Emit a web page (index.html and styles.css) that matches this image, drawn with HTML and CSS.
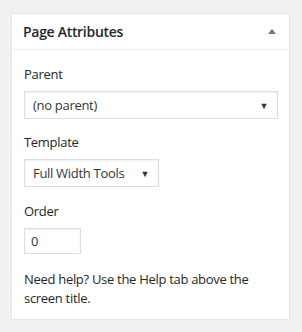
FILE: index.html
```html
<!DOCTYPE html>
<html lang="en">
<head>
  <meta charset="UTF-8">
  <title>Page Attributes</title>
  <link rel="stylesheet" href="styles.css">
</head>
<body>

  <!-- Page Attributes box -->
  <div class="postbox">
    <div class="postbox-header">
      <h2 class="hndle">Page Attributes</h2>
      <span class="toggle-indicator"></span>
    </div>

    <div class="inside">
      <p class="label">Parent</p>
      <div class="select wide">
        <span>(no parent)</span>
        <span class="caret">&#9660;</span>
      </div>

      <p class="label">Template</p>
      <div class="select">
        <span>Full Width Tools</span>
        <span class="caret">&#9660;</span>
      </div>

      <p class="label">Order</p>
      <div class="order-input">0</div>

      <p class="help">Need help? Use the Help tab above the screen title.</p>
    </div>
  </div>

</body>
</html>
```

FILE: styles.css
```css
body {
  background-color: #f1f1f1;
  font-family: 'Open Sans', sans-serif;
  font-size: 13px;
  letter-spacing: -0.3px;
  color: #23282d;
  margin: 0;
  padding: 13px 12px 0 11px;
}

.postbox {
  background: #fff;
  border: 1px solid #e5e5e5;
  box-shadow: 0 1px 1px rgba(0, 0, 0, 0.04);
}

.postbox-header {
  display: flex;
  align-items: center;
  justify-content: space-between;
  height: 35px;
  padding: 0 13px 0 11px;
  border-bottom: 1px solid #eee;
}

.hndle {
  margin: 0;
  font-size: 14px;
  font-weight: 600;
  color: #23282d;
}

.toggle-indicator {
  width: 0;
  height: 0;
  border-left: 4px solid transparent;
  border-right: 4px solid transparent;
  border-bottom: 5px solid #72777c;
}

.inside {
  padding: 14px 11px 11px 12px;
}

.label {
  margin: 0 0 7px;
  line-height: 20px;
  color: #23282d;
}

.select {
  display: flex;
  align-items: center;
  justify-content: space-between;
  box-sizing: border-box;
  width: 135px;
  height: 28px;
  padding: 0 9px 0 8px;
  margin-bottom: 14px;
  border: 1px solid #ddd;
  color: #32373c;
  box-shadow: inset 0 1px 2px rgba(0, 0, 0, 0.07);
}

.select.wide {
  width: 254px;
  margin-bottom: 13px;
}

.caret {
  font-size: 9px;
  color: #32373c;
}

.order-input {
  box-sizing: border-box;
  width: 57px;
  height: 26px;
  line-height: 24px;
  padding: 0 6px;
  border: 1px solid #ddd;
  color: #32373c;
  box-shadow: inset 0 1px 2px rgba(0, 0, 0, 0.07);
}

.help {
  margin: 16px 0 0;
  line-height: 19px;
}
```
